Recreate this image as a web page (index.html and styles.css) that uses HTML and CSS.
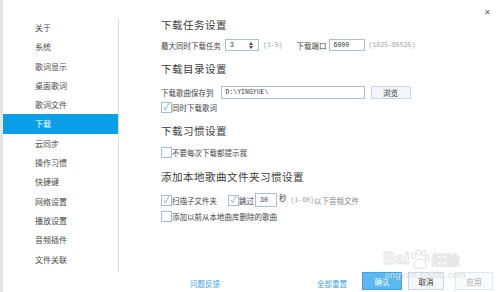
FILE: index.html
```html
<!DOCTYPE html>
<html lang="zh-CN">
<head>
    <meta charset="UTF-8">
    <title>设置 - 下载</title>
    <link rel="stylesheet" href="styles.css">
</head>
<body>
    <div class="window">
        <div class="sidebar">
            <ul class="nav">
                <li>关于</li>
                <li>系统</li>
                <li>歌词显示</li>
                <li>桌面歌词</li>
                <li>歌词文件</li>
                <li class="active">下载</li>
                <li>云同步</li>
                <li>操作习惯</li>
                <li>快捷键</li>
                <li>网络设置</li>
                <li>播放设置</li>
                <li>音频插件</li>
                <li>文件关联</li>
            </ul>
        </div>

        <div class="main">
            <span class="close">✕</span>

            <h2 class="title">下载任务设置</h2>
            <div class="row row-task">
                <span class="label">最大同时下载任务</span>
                <span class="input spin"><span>3</span><i class="arrows"><b class="up"></b><b class="down"></b></i></span>
                <span class="hint">(1-5)</span>
                <span class="label port-label">下载端口</span>
                <span class="input port">6000</span>
                <span class="hint">(1025-65535)</span>
            </div>

            <h2 class="title t-dir">下载目录设置</h2>
            <div class="row row-dir">
                <span class="label">下载歌曲保存到</span>
                <span class="input path">D:\YINGYUE\</span>
                <span class="btn browse">浏览</span>
            </div>
            <label class="check on">同时下载歌词</label>

            <h2 class="title t-habit">下载习惯设置</h2>
            <label class="check c-prompt">不要每次下载都提示我</label>

            <h2 class="title t-local">添加本地歌曲文件夹习惯设置</h2>
            <div class="row row-scan">
                <label class="check on">扫描子文件夹</label>
                <label class="check on skip">跳过</label>
                <span class="input sec">30</span>
                <span class="label sec-label">秒</span>
                <span class="hint">(1-60)</span><span class="label grey">以下音频文件</span>
            </div>
            <label class="check c-deleted">添加以前从本地曲库删除的歌曲</label>

            <div class="footer">
                <a class="link feedback">问题反馈</a>
                <a class="link reset">全部重置</a>
                <span class="btn primary">确认</span>
                <span class="btn">取消</span>
                <span class="btn disabled">应用</span>
            </div>

            <div class="watermark">
                <div class="wm-logo">
                    <span>Bai</span>
                    <svg width="21" height="21" viewBox="0 0 22 22">
                        <g fill="none" stroke="#e6e6e6" stroke-width="1.3">
                            <ellipse cx="5" cy="7" rx="2.2" ry="3"/>
                            <ellipse cx="10" cy="3.5" rx="2.2" ry="2.8"/>
                            <ellipse cx="15.5" cy="4.5" rx="2.2" ry="2.8"/>
                            <ellipse cx="19" cy="9.5" rx="2" ry="2.6"/>
                            <path d="M5 18c0-5 4-8 7-8s6 3 6 8c0 3-12 3-13 0z"/>
                        </g>
                    </svg>
                    <span class="wm-cn">经验</span>
                </div>
                <div class="wm-url">jingyan.baidu.com</div>
            </div>
        </div>
    </div>
</body>
</html>
```

FILE: styles.css
```css
* {
    box-sizing: border-box;
}

body {
    margin: 0;
    background: #ffffff;
    font-family: "Noto Sans CJK SC", "Noto Sans", sans-serif;
    color: #3c3c3c;
}

.window {
    display: flex;
    width: 500px;
    height: 292px;
    border-left: 3px solid #e6e6e6;
    overflow: hidden;
}

/* left menu */
.sidebar {
    width: 116px;
    flex-shrink: 0;
    padding-top: 18px;
}

.nav {
    list-style: none;
    margin: 0;
    padding: 0;
    height: 254px;
    border-right: 1px solid #dcdcdc;
}

.nav li {
    height: 19.3px;
    line-height: 19.3px;
    padding-left: 32px;
    font-size: 8px;
    color: #4a4a4a;
}

.nav li.active {
    background-color: #0b9fe8;
    color: #ffffff;
}

/* right panel */
.main {
    position: relative;
    flex: 1;
    display: flex;
    flex-direction: column;
    align-items: flex-start;
    padding: 17px 7px 1px 42px;
}

.close {
    position: absolute;
    top: 6px;
    right: 9px;
    font-size: 8px;
    color: #666;
}

.title {
    margin: 0;
    height: 16px;
    line-height: 16px;
    font-size: 10.5px;
    font-weight: normal;
    letter-spacing: 0.5px;
    color: #3a3a3a;
}

.t-dir {
    margin-top: 9px;
}

.t-habit {
    margin-top: 10px;
}

.t-local {
    margin-top: 11px;
}

.row {
    display: flex;
    align-items: center;
    height: 14px;
    font-size: 7.5px;
}

.row-task {
    margin-top: 5px;
}

.row-dir {
    margin-top: 8px;
}

.row-scan {
    margin-top: 8px;
}

.label {
    color: #444;
    white-space: nowrap;
}

.grey {
    color: #888;
}

.hint {
    font-family: "Liberation Mono", monospace;
    font-size: 6.5px;
    color: #a0a0a0;
    margin-left: 4px;
}

.input {
    display: flex;
    align-items: center;
    height: 12px;
    border: 1px solid #a9c0d6;
    background: #fff;
    font-family: "Liberation Mono", monospace;
    font-size: 6.5px;
    color: #333;
    padding-left: 4px;
}

.spin {
    width: 34px;
    margin-left: 4px;
    justify-content: space-between;
    padding-right: 5px;
}

.arrows {
    display: flex;
    flex-direction: column;
    gap: 1px;
}

.arrows b {
    width: 0;
    height: 0;
    border-left: 2.5px solid transparent;
    border-right: 2.5px solid transparent;
}

.arrows .up {
    border-bottom: 3px solid #444;
}

.arrows .down {
    border-top: 3px solid #444;
}

.port-label {
    margin-left: 14px;
}

.port {
    width: 36px;
    margin-left: 2px;
}

.path {
    width: 144px;
    margin-left: 7px;
    height: 13px;
}

.btn {
    display: inline-flex;
    align-items: center;
    justify-content: center;
    border: 1px solid #c9d8e6;
    background: #f3f7fb;
    font-size: 7.5px;
    color: #333;
}

.browse {
    width: 40px;
    height: 13px;
    margin-left: 6px;
}

/* checkboxes */
.check {
    display: flex;
    align-items: center;
    height: 11px;
    font-size: 7.5px;
    color: #444;
    white-space: nowrap;
}

.check::before {
    content: "";
    width: 9px;
    height: 9px;
    border: 1px solid #a3bfd6;
    background: #fff;
    flex-shrink: 0;
}

.check.on::before {
    content: "✓";
    font-size: 9px;
    line-height: 8px;
    color: #7ea6c8;
    text-align: center;
}

.main > .check {
    margin-top: 3px;
}

.main > .c-prompt {
    margin-top: 8px;
}

.main > .c-deleted {
    margin-top: 4px;
}

.skip {
    margin-left: 11px;
}

.sec {
    width: 22px;
    height: 14px;
    margin-left: 1px;
}

.sec-label {
    align-self: flex-start;
    margin-left: 2px;
    margin-top: -1px;
}

/* footer */
.footer {
    display: flex;
    align-items: center;
    width: 100%;
    margin-top: auto;
    height: 20px;
    font-size: 7.5px;
}

.link {
    color: #3ba4e0;
}

.feedback {
    margin-left: 29px;
    margin-top: 5px;
}

.reset {
    margin-left: auto;
    margin-top: 5px;
    margin-right: 15px;
}

.footer .btn {
    width: 36px;
    height: 18px;
    margin-left: 6px;
}

.footer .primary {
    width: 40px;
    margin-left: 0;
    background: #5cb8ee;
    border-color: #3fa5e2;
    color: #fff;
}

.footer .disabled {
    margin-left: 11px;
    width: 38px;
    background: #f8fafc;
    border-color: #dfe7ef;
    color: #a8a8a8;
}

/* watermark over the corner */
.watermark {
    position: absolute;
    left: 264px;
    top: 248px;
    pointer-events: none;
}

.wm-logo {
    display: flex;
    align-items: center;
    height: 22px;
    font-family: "Liberation Sans", sans-serif;
    font-size: 17px;
    font-weight: bold;
    color: transparent;
    -webkit-text-stroke: 1px #e4e4e4;
}

.wm-cn {
    font-family: "Noto Sans CJK SC", sans-serif;
    font-size: 14px;
    margin-left: 1px;
}

.wm-url {
    font-family: "Liberation Sans", sans-serif;
    font-size: 9px;
    color: #dcdcdc;
    margin-top: 0;
    margin-left: 2px;
    letter-spacing: 0.5px;
}
```
